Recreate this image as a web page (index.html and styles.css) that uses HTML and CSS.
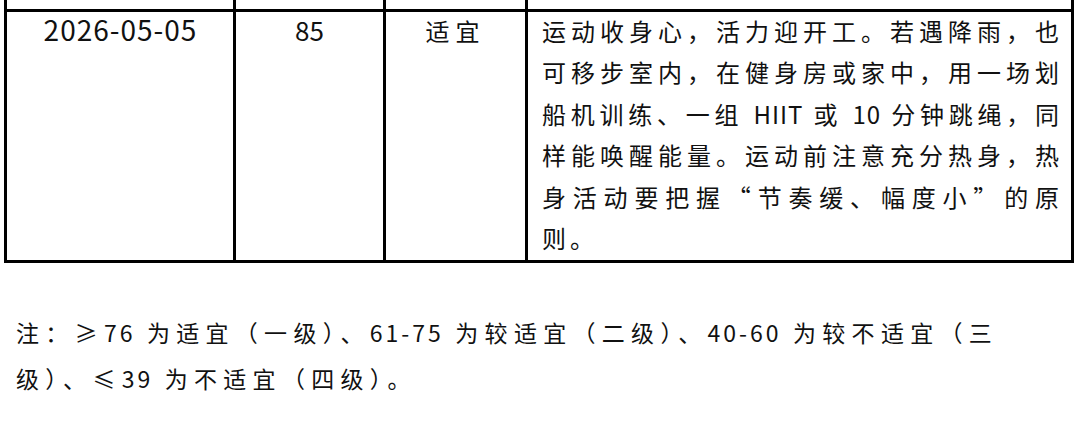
FILE: index.html
```html
<!DOCTYPE html>
<html lang="zh-CN">
<head>
<meta charset="utf-8">
<title>运动指数</title>
<link rel="stylesheet" href="styles.css">
</head>
<body>
<table class="grid">
  <colgroup>
    <col class="c-date">
    <col class="c-score">
    <col class="c-level">
    <col class="c-desc">
  </colgroup>
  <tr class="prev"><td></td><td></td><td></td><td></td></tr>
  <tr class="row">
    <td class="date">2026-05-05</td>
    <td class="score">85</td>
    <td class="level">适宜</td>
    <td class="desc"><div class="desc-text">运动收身心，活力迎开工。若遇降雨，也可移步室内，在健身房或家中，用一场划船机训练、一组 <span class="lat">HIIT</span> 或 <span class="lat">10</span> 分钟跳绳，同样能唤醒能量。运动前注意充分热身，热身活动要把握“节奏缓、幅度小”的原则。</div></td>
  </tr>
</table>
<p class="note">注：≥<span class="lat">76</span> 为适宜（一级）、<span class="lat">61-75</span> 为较适宜（二级）、<span class="lat">40-60</span> 为较不适宜（三级）、≤<span class="lat">39</span> 为不适宜（四级）。</p>
</body>
</html>
```
FILE: styles.css
```css
body {
  margin: 0;
  background: #ffffff;
  color: #111111;
  font-family: "Noto Sans CJK SC", "Noto Sans", sans-serif;
}

.grid {
  border-collapse: collapse;
  table-layout: fixed;
  width: 1070px;
  margin-left: 4px;
}

.c-date { width: 229px; }
.c-score { width: 150px; }
.c-level { width: 142px; }
.c-desc { width: 546px; }

.grid td {
  border: 3px solid #000000;
  padding: 0;
  vertical-align: baseline;
}

.prev td {
  border-top: none;
  height: 9px;
}

.date {
  text-align: center;
  font-size: 28px;
  line-height: 32px;
  letter-spacing: 1px;
  text-indent: 1px;
}

.score {
  text-align: center;
  font-size: 26px;
  line-height: 32px;
}

.level {
  text-align: center;
  font-size: 24px;
  line-height: 32px;
  letter-spacing: 6px;
}

.grid td.desc {
  padding: 0 8px 2px 14px;
  font-size: 24px;
  line-height: 41.4px;
  letter-spacing: 4px;
  text-align: justify;
}

.desc-text {
  margin-top: -2px;
}

.lat {
  letter-spacing: 1px;
}

.note {
  margin: 46px 0 0;
  padding-left: 16px;
  width: 1020px;
  font-size: 23px;
  line-height: 46px;
  letter-spacing: 6.3px;
}

.note .lat {
  letter-spacing: 3px;
}
```
